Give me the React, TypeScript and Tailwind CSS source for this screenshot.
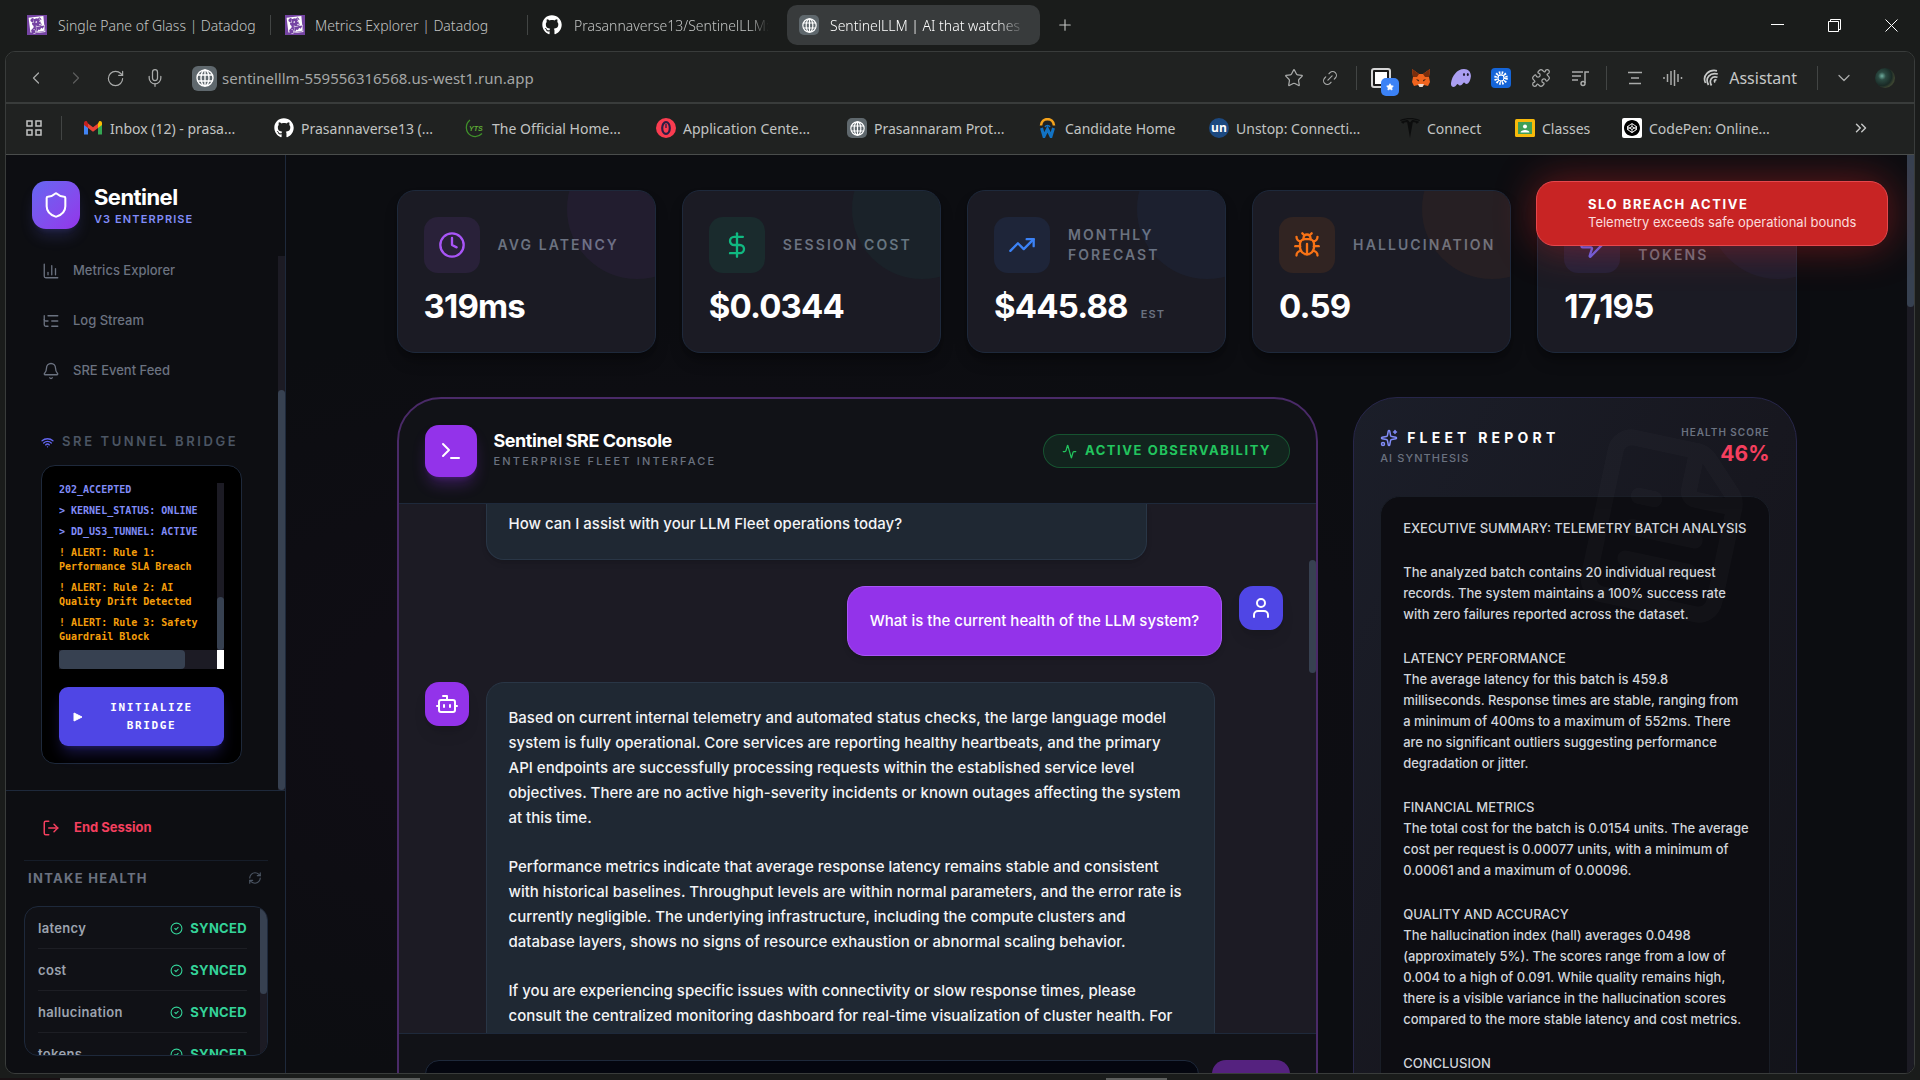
import type { ReactNode } from 'react';
import {
  Activity,
  Bell,
  Bot,
  Bug,
  ChartColumn,
  ChevronDown,
  ChevronLeft,
  ChevronRight,
  ChevronsRight,
  CircleCheck,
  Clock,
  DollarSign,
  FileText,
  Link2,
  ListTree,
  LogOut,
  Mic,
  Plus,
  Puzzle,
  RefreshCw,
  RotateCw,
  Shield,
  Sparkles,
  Star,
  Terminal,
  TrendingUp,
  User,
  Wifi,
  Zap,
} from 'lucide-react';
import { FaGithub } from 'react-icons/fa';
import { SiCodepen, SiDatadog, SiTesla } from 'react-icons/si';

const DatadogIcon = () => (
  <span className="flex size-5 shrink-0 items-center justify-center bg-[#7544a3] text-white">
    <SiDatadog size={18} />
  </span>
);

const Globe = ({ size }: { size: number }) => (
  <svg width={size} height={size} viewBox="0 0 18 18" fill="none" stroke="currentColor" strokeWidth="1.400">
    <circle cx="9" cy="9" r="8" />
    <ellipse cx="9" cy="9" rx="4" ry="8" />
    <path d="M9 1v16M1.500 6h15M1.500 12h15" />
  </svg>
);

const GlobeIcon = () => (
  <span className="flex size-5 shrink-0 items-center justify-center rounded-[5px] bg-[#5f686d] text-white">
    <Globe size={15} />
  </span>
);

const GmailIcon = () => (
  <svg className="size-5 shrink-0" viewBox="0 0 20 20">
    <path d="M1 5v11.500h4V9z" fill="#4285f4" />
    <path d="M19 5v11.500h-4V9z" fill="#34a853" />
    <path d="M15 5.500V10l4-3V5c0-2-2-2.600-3-1.600z" fill="#fbbc04" />
    <path d="M5 5.500 10 9.300l5-3.800V10l-5 3.800L5 10z" fill="#ea4335" />
    <path d="M5 5.500V10L1 7V5c0-2 2-2.600 3-1.600z" fill="#c5221f" />
  </svg>
);

const YtsIcon = () => (
  <svg className="size-5 shrink-0" viewBox="0 0 20 20">
    <path d="M5 2C0 6 0 14 6 17.500c4 2 8 1 11-2" fill="none" stroke="#3f8f2a" strokeWidth="1.300" />
    <text x="4" y="12.500" fontSize="7" fontWeight="700" fontStyle="italic" fontFamily="Liberation Sans, sans-serif" fill="#5fae35">
      YTS
    </text>
  </svg>
);

const OperaIcon = () => (
  <svg className="size-5 shrink-0" viewBox="0 0 20 20">
    <circle cx="10" cy="10" r="10" fill="#fa3c50" />
    <ellipse cx="10" cy="10" rx="3.800" ry="5.800" fill="none" stroke="#2b1d44" strokeWidth="2.200" />
    <path d="M10 6v4" stroke="#2b1d44" strokeWidth="1.300" />
  </svg>
);

const WorkdayIcon = () => (
  <svg className="size-5 shrink-0" viewBox="0 0 20 20" fill="none">
    <path d="M3 7.500C3.500-1 15.500-1 16 7.500" stroke="#f5a31c" strokeWidth="2.600" />
    <path d="M3.500 10l2.500 8.500L9.500 11l3.500 7.500L15.500 10" stroke="#1273c4" strokeWidth="3" />
    <path d="M7 9c1-2 4-2 5 0" stroke="#1273c4" strokeWidth="1.500" />
  </svg>
);

const UnstopIcon = () => (
  <span className="flex size-5 shrink-0 items-center justify-center rounded-full bg-[#1c4980] font-['Open_Sans',sans-serif] text-[12px] leading-3 font-bold text-white">
    un
  </span>
);

const ClassroomIcon = () => (
  <svg className="size-5 shrink-0" viewBox="0 0 20 20">
    <rect x="0" y="1" width="20" height="18" rx="1.500" fill="#f6b90b" />
    <rect x="3" y="4" width="14" height="12" fill="#3f9f57" />
    <circle cx="10" cy="8.500" r="2" fill="#fff" />
    <path d="M5.500 14.500c0-3.500 9-3.500 9 0z" fill="#fff" />
  </svg>
);

const MetamaskIcon = () => (
  <svg className="size-5" viewBox="0 0 20 20">
    <path d="M1 1l7 5h4l7-5-1 8 1 5-2 4-4-1-2 2H9l-2-2-4 1-2-4 1-5z" fill="#f0641e" />
    <path d="M1 1l7 5-2 3-4 0zM19 1l-7 5 2 3 4 0z" fill="#7a2d0c" />
    <path d="M7 16h6l-1.500 3h-3z" fill="#e8d9cf" />
    <path d="M5 11l3 1-.5 1.500zM15 11l-3 1 .5 1.500z" fill="#2a1a12" />
  </svg>
);

const PhantomIcon = () => (
  <svg className="size-5" viewBox="0 0 20 20">
    <path
      d="M0 15C1 8 6 1 13 1c5 0 7.500 4 6.800 8-.6 4-2.300 7-4.300 7-1.500 0-1.500-1.500-2.500-1.500s-1.500 3-4 3c-1.700 0-1.500-1.500-2.500-1.500S5 19 2.500 19C.8 19-.2 17.500 0 15z"
      fill="#ab9ff2"
    />
    <ellipse cx="13" cy="6.500" rx="1" ry="1.600" fill="#1f1c33" />
    <ellipse cx="16.800" cy="6.500" rx="1" ry="1.600" fill="#1f1c33" />
  </svg>
);

const BurstIcon = () => (
  <svg className="size-5" viewBox="0 0 20 20">
    <rect width="20" height="20" rx="4" fill="#1565d8" />
    <circle cx="10" cy="10" r="4.800" fill="none" stroke="#fff" strokeWidth="4" strokeDasharray="1.400 1.113" />
    <circle cx="10" cy="10" r="3" fill="none" stroke="#fff" strokeWidth="1" />
  </svg>
);

const ReaderIcon = () => (
  <span className="relative flex size-5">
    <span className="size-full rounded-[3px] border-2 border-[#d5d5d5] bg-white outline-2 -outline-offset-4 outline-[#1a1a1a]" />
    <span className="absolute top-2.5 left-2.5 flex size-[18px] items-center justify-center rounded-[5px] bg-[#3b82f6] text-white">
      <Star size={8} fill="currentColor" />
    </span>
  </span>
);

const PlaylistIcon = () => (
  <svg className="size-[18px]" viewBox="0 0 18 18" fill="none" stroke="currentColor" strokeWidth="1.500">
    <path d="M1 3h11M1 7h9M1 11h6M14 14V3h4" />
    <circle cx="12" cy="14.500" r="2" />
  </svg>
);

const LinesIcon = () => (
  <svg className="size-4" viewBox="0 0 16 16" stroke="currentColor" strokeWidth="1.500">
    <path d="M1 2.500h14M4 8h8M2 13.500h12" />
  </svg>
);

const WaveIcon = () => (
  <svg className="size-5" viewBox="0 0 20 20" stroke="currentColor" strokeWidth="1.500">
    <path d="M1 9v2M4.500 6v8M8 3v14M11.500 2v16M15 6v8M18.500 9v2" />
  </svg>
);

const AssistantIcon = () => (
  <svg className="size-[18px]" viewBox="0 0 18 18" fill="none" stroke="currentColor" strokeWidth="1.700">
    <path d="M2.500 14C-1 6.500 6 0 14 1.800M5.500 16C1.500 9 7 3 14.800 5M8.500 16.500C5.500 11 9 6.500 14.500 8.300M12 13.500c-1-1.500-.5-3 1.500-2.500" />
  </svg>
);

const tabs = [
  { title: 'Single Pane of Glass | Datadog', style: 'w-[243px] gap-[11px]', fade: '', icon: <DatadogIcon /> },
  { title: 'Metrics Explorer | Datadog', style: 'w-[242px] gap-2.5', fade: '', icon: <DatadogIcon /> },
  {
    title: 'Prasannaverse13/SentinelLLM:',
    style: 'w-[245px] gap-3',
    fade: 'mask-r-from-90%',
    icon: <FaGithub size={20} className="shrink-0 text-white" />,
  },
];

const bookmarks = [
  { title: 'Inbox (12) - prasa...', width: 'w-[191px]', icon: <GmailIcon /> },
  { title: 'Prasannaverse13 (...', width: 'w-[191px]', icon: <FaGithub size={20} className="shrink-0 text-white" /> },
  { title: 'The Official Home...', width: 'w-[191px]', icon: <YtsIcon /> },
  { title: 'Application Cente...', width: 'w-[191px]', icon: <OperaIcon /> },
  { title: 'Prasannaram Prot...', width: 'w-[191px]', icon: <GlobeIcon /> },
  { title: 'Candidate Home', width: 'w-[171px]', icon: <WorkdayIcon /> },
  { title: 'Unstop: Connecti...', width: 'w-[191px]', icon: <UnstopIcon /> },
  { title: 'Connect', width: 'w-[115px]', icon: <SiTesla size={20} className="shrink-0 text-[#0c0d0d]" /> },
  { title: 'Classes', width: 'w-[107px]', icon: <ClassroomIcon /> },
  {
    title: 'CodePen: Online...',
    width: 'w-[191px]',
    icon: (
      <span className="flex size-5 shrink-0 items-center justify-center rounded-[2px] bg-white text-black">
        <SiCodepen size={16} />
      </span>
    ),
  },
];

const TabBar = () => (
  <header className="flex h-[51px] shrink-0 items-center pb-px pl-[27px] text-[14px] font-light text-[#c2c4c3]">
    {tabs.map((tab, i) => (
      <div key={tab.title} className="flex items-center">
        {i > 0 && <span className="mr-3.5 h-5 w-px bg-[#424544]" />}
        <button className={`flex items-center text-left ${tab.style}`}>
          {tab.icon}
          <span className={`max-w-[201px] overflow-hidden whitespace-nowrap ${tab.fade}`}>{tab.title}</span>
        </button>
      </div>
    ))}
    <button className="flex h-10 w-[253px] items-center gap-[11px] rounded-[10px] bg-[#383b3c] pl-3 text-left text-white">
      <GlobeIcon />
      <span className="w-[196px] overflow-hidden mask-r-from-85% whitespace-nowrap">SentinelLLM | AI that watches</span>
    </button>
    <button aria-label="New tab" className="ml-4">
      <Plus size={18} strokeWidth={1.5} />
    </button>
    <div className="ml-auto flex gap-11 pr-[22px] text-white">
      <button aria-label="Minimize">
        <svg className="size-[13px]" viewBox="0 0 13 13" stroke="currentColor">
          <path d="M0 5.500h13" />
        </svg>
      </button>
      <button aria-label="Restore">
        <svg className="size-[13px]" viewBox="0 0 13 13" fill="none" stroke="currentColor">
          <path d="M.5 2.500h10v10H.5zM2.500 2.500v-2h10v10h-2" />
        </svg>
      </button>
      <button aria-label="Close">
        <svg className="size-[13px]" viewBox="0 0 13 13" stroke="currentColor">
          <path d="M.5.500l12 12M12.500.500l-12 12" />
        </svg>
      </button>
    </div>
  </header>
);

const Divider = () => <span className="h-6 w-px shrink-0 bg-[#424544]" />;

const Toolbar = () => (
  <div className="flex h-[52px] shrink-0 items-center border-b-2 border-[#393c3b] bg-[#202221] pt-0.5 pl-5 text-[#a9abaa]">
    <div className="flex items-center gap-5">
      <button aria-label="Back">
        <ChevronLeft size={20} strokeWidth={1.5} />
      </button>
      <button aria-label="Forward" className="text-[#5b5d5c]">
        <ChevronRight size={20} strokeWidth={1.5} />
      </button>
      <button aria-label="Reload">
        <RotateCw size={19} strokeWidth={1.5} />
      </button>
      <button aria-label="Voice search">
        <Mic size={20} strokeWidth={1.5} />
      </button>
    </div>
    <span className="ml-[27px] flex size-[25px] items-center justify-center rounded-[6px] bg-[#5f686d] text-white">
      <Globe size={18} />
    </span>
    <input
      aria-label="Address"
      readOnly
      value="sentinelllm-559556316568.us-west1.run.app"
      className="ml-[5px] min-w-0 flex-1 text-[15px] text-[#a4a6a5] outline-none"
    />
    <div className="flex items-center gap-[17px]">
      <Star size={20} strokeWidth={1.5} />
      <Link2 size={18} strokeWidth={1.5} className="-rotate-45" />
      <Divider />
    </div>
    <div className="ml-3.5 flex items-center gap-5">
      <ReaderIcon />
      <MetamaskIcon />
      <PhantomIcon />
      <BurstIcon />
      <Puzzle size={20} strokeWidth={1.5} />
      <PlaylistIcon />
    </div>
    <div className="ml-[17px] flex items-center gap-5">
      <Divider />
      <LinesIcon />
      <WaveIcon />
      <button className="flex items-center gap-2 text-[16px] text-[#c6c8c7]">
        <AssistantIcon />
        Assistant
      </button>
      <Divider />
    </div>
    <ChevronDown size={20} strokeWidth={1.5} className="ml-4" />
    <span className="mr-[19px] ml-[21px] size-5 rounded-full bg-[#2a3a34] bg-[radial-gradient(circle_at_35%_40%,#6fae9f_0,#2b4a42_22%,#1a2a26_55%,#3a4330_70%)]" />
  </div>
);

const BookmarkBar = () => (
  <nav className="flex h-[51px] shrink-0 items-center border-b border-[#4a4d4c] bg-[#202221] pb-0.5 pl-5 text-[14px] text-[#c2c4c3]">
    <svg className="size-4 shrink-0" viewBox="0 0 16 16" fill="none" stroke="currentColor" strokeWidth="1.500">
      <path d="M1 1h5v5H1zM10 1h5v5h-5zM1 10h5v5H1zM10 10h5v5h-5z" />
    </svg>
    <span className="mr-[21px] ml-[19px] h-6 w-px bg-[#424544]" />
    {bookmarks.map((b) => (
      <a key={b.title} href="#" className={`flex shrink-0 items-center gap-[7px] whitespace-nowrap ${b.width}`}>
        {b.icon}
        {b.title}
      </a>
    ))}
    <button aria-label="More bookmarks" className="mr-11 ml-auto">
      <ChevronsRight size={18} />
    </button>
  </nav>
);

const navItems = [
  { label: 'Metrics Explorer', icon: <ChartColumn size={18} strokeWidth={1.75} /> },
  { label: 'Log Stream', icon: <ListTree size={18} strokeWidth={1.75} /> },
  { label: 'SRE Event Feed', icon: <Bell size={18} strokeWidth={1.75} /> },
];

const intake = ['latency', 'cost', 'hallucination', 'tokens'];

const BridgeCard = () => (
  <div className="rounded-[14px] border border-[#1e293b] bg-black p-[17px] font-['DejaVu_Sans_Mono',monospace]">
    <div className="flex h-[167px]">
      <div className="flex flex-1 flex-col gap-[7px] overflow-hidden text-[10px] leading-[14px] font-bold text-[#818cf8]">
        <p>202_ACCEPTED</p>
        <p className="whitespace-nowrap">&gt; KERNEL_STATUS: ONLINE</p>
        <p className="whitespace-nowrap">&gt; DD_US3_TUNNEL: ACTIVE</p>
        <p className="text-[#f59e0b]">
          ! ALERT: Rule 1:
          <br />
          Performance SLA Breach
        </p>
        <p className="text-[#f59e0b]">
          ! ALERT: Rule 2: AI
          <br />
          Quality Drift Detected
        </p>
        <p className="text-[#f59e0b]">
          ! ALERT: Rule 3: Safety
          <br />
          Guardrail Block
        </p>
      </div>
      <div className="flex w-[7px] items-end bg-[#1c1b24]">
        <span className="h-[53px] w-full rounded-[4px] bg-[#374151]" />
      </div>
    </div>
    <div className="flex h-[19px]">
      <div className="flex-1 bg-[#1c1b24]">
        <div className="h-full w-4/5 rounded-[4px] bg-[#374151]" />
      </div>
      <span className="w-[7px] bg-white" />
    </div>
    <button className="mt-[18px] flex h-[59px] w-full items-center rounded-[9px] bg-[#4f46e5] pr-3 pl-3.5 text-[11px] leading-[18px] font-bold tracking-[0.15em] text-white shadow-lg shadow-[#4f46e5]/30">
      <svg className="size-2.5" viewBox="0 0 10 10">
        <path d="M1 1v8l8-4z" fill="currentColor" stroke="currentColor" strokeLinejoin="round" />
      </svg>
      <span className="flex-1 pl-2 text-center">
        INITIALIZE
        <br />
        BRIDGE
      </span>
    </button>
  </div>
);

const Sidebar = () => (
  <aside className="flex w-[280px] shrink-0 flex-col border-r border-[#1e293b] bg-[#0d0e12]">
    <div className="flex h-[101px] shrink-0 gap-3.5 px-[26px] pt-[26px]">
      <span className="flex size-12 items-center justify-center rounded-[14px] bg-linear-to-br from-[#6366f1] to-[#9333ea] text-white shadow-lg shadow-[#6366f1]/20">
        <Shield size={28} strokeWidth={1.75} />
      </span>
      <div className="pt-0.5">
        <p className="text-[22px] leading-7 font-bold tracking-tight text-white">Sentinel</p>
        <p className="text-[11px] leading-4 font-semibold tracking-[0.1em] text-[#818cf8]">V3 ENTERPRISE</p>
      </div>
    </div>

    <div className="flex min-h-0 flex-1">
      <div className="flex-1 overflow-hidden pr-9 pl-[35px]">
        <nav className="flex flex-col gap-5 pl-px text-[13px] font-medium text-[#6b7280]">
          {navItems.map((item) => (
            <a key={item.label} href="#" className="flex h-[30px] items-center gap-[13px]">
              {item.icon}
              {item.label}
            </a>
          ))}
        </nav>
        <h3 className="mt-[46px] mb-[13px] flex h-5 items-center gap-2 text-[13px] font-semibold tracking-[0.2em] whitespace-nowrap text-[#4b5563]">
          <Wifi size={13} strokeWidth={2.5} className="shrink-0 text-[#6366f1]" />
          SRE TUNNEL BRIDGE
        </h3>
        <BridgeCard />
      </div>
      <div className="w-[7px] bg-[#1c1b24] pt-[134px]">
        <div className="h-full rounded-[4px] bg-[#374151]" />
      </div>
    </div>

    <div className="h-[283px] shrink-0 border-t border-[#1e293b] pr-[17px] pl-[18px]">
      <button className="flex h-[69px] w-full items-center gap-3.5 pt-[5px] pl-[18px] text-[13px] font-bold text-[#f43f5e]">
        <LogOut size={18} />
        End Session
      </button>
      <div className="flex h-[46px] justify-between border-t border-[#161d29] px-1 pt-[7px] text-[13px] leading-5 font-bold tracking-[0.1em] text-[#6b7280]">
        INTAKE HEALTH
        <button aria-label="Refresh" className="mr-0.5 h-5 text-[#4b5563]">
          <RefreshCw size={14} />
        </button>
      </div>
      <div className="flex h-[150px] overflow-hidden rounded-[14px] border border-[#1e293b] bg-[#101116]">
        <ul className="flex-1 px-[13px] text-[13px] font-semibold">
          {intake.map((name) => (
            <li key={name} className="flex h-[42px] items-center justify-between border-b border-[#1d1e24] pt-0.5 tracking-wide text-[#9ca3af]">
              {name}
              <span className="flex items-center gap-[7px] font-bold text-[#34d399]">
                <CircleCheck size={13} />
                SYNCED
              </span>
            </li>
          ))}
        </ul>
        <div className="w-[7px] bg-[#1c1b24]">
          <div className="h-[87px] rounded-[4px] bg-[#374151]" />
        </div>
      </div>
    </div>
  </aside>
);

type StatProps = {
  label: string;
  value: string;
  suffix?: string;
  icon: ReactNode;
  tint: string;
  blob: string;
};

const StatCard = ({ label, value, suffix, icon, tint, blob }: StatProps) => (
  <div className="relative h-[163px] overflow-hidden rounded-[18px] border border-[#1e293b] bg-[#1b1b24] p-[26px] shadow-lg shadow-black/30">
    <span className={`absolute -top-[52px] -right-[52px] size-[140px] rounded-full ${blob}`} />
    <div className="flex items-center gap-[18px]">
      <span className={`flex size-14 shrink-0 items-center justify-center rounded-[14px] ${tint}`}>{icon}</span>
      <p className="text-[14px] leading-5 font-semibold tracking-[0.15em] text-[#6b7280]">{label}</p>
    </div>
    <p className="mt-[13px] flex items-baseline gap-[13px] text-[33px] leading-10 font-bold tracking-tight text-white">
      {value}
      {suffix && <span className="text-[11px] leading-4 font-semibold tracking-[0.1em] text-[#6b7280]">{suffix}</span>}
    </p>
  </div>
);

const stats: StatProps[] = [
  { label: 'AVG LATENCY', value: '319ms', icon: <Clock size={28} />, tint: 'bg-[#a855f7]/10 text-[#a855f7]', blob: 'bg-[#a855f7]/5' },
  { label: 'SESSION COST', value: '$0.0344', icon: <DollarSign size={28} />, tint: 'bg-[#10b981]/10 text-[#10b981]', blob: 'bg-[#10b981]/5' },
  { label: 'MONTHLY FORECAST', value: '$445.88', suffix: 'EST', icon: <TrendingUp size={28} />, tint: 'bg-[#3b82f6]/10 text-[#3b82f6]', blob: 'bg-[#3b82f6]/5' },
  { label: 'HALLUCINATION', value: '0.59', icon: <Bug size={28} />, tint: 'bg-[#f97316]/10 text-[#f97316]', blob: 'bg-[#f97316]/5' },
  { label: 'TOTAL TOKENS', value: '17,195', icon: <Zap size={28} />, tint: 'bg-[#6366f1]/10 text-[#6366f1]', blob: 'bg-[#6366f1]/5' },
];

const answer = [
  `Based on current internal telemetry and automated status checks, the large language model
system is fully operational. Core services are reporting healthy heartbeats, and the primary
API endpoints are successfully processing requests within the established service level
objectives. There are no active high-severity incidents or known outages affecting the system
at this time.`,
  `Performance metrics indicate that average response latency remains stable and consistent
with historical baselines. Throughput levels are within normal parameters, and the error rate is
currently negligible. The underlying infrastructure, including the compute clusters and
database layers, shows no signs of resource exhaustion or abnormal scaling behavior.`,
  `If you are experiencing specific issues with connectivity or slow response times, please
consult the centralized monitoring dashboard for real-time visualization of cluster health. For`,
];

const Console = () => (
  <section className="col-span-2 overflow-hidden rounded-[44px] border-2 border-[#4a2a68] bg-[#111217]">
    <div className="flex h-[105px] items-center border-b border-[#1e293b] px-[26px]">
      <span className="flex size-[52px] items-center justify-center rounded-[14px] bg-[#9333ea] text-white shadow-lg shadow-[#9333ea]/30">
        <Terminal size={24} />
      </span>
      <div className="ml-[17px] pb-1">
        <h2 className="text-[18px] leading-6 font-bold tracking-tight text-white">Sentinel SRE Console</h2>
        <p className="text-[11px] leading-4 font-medium tracking-[0.2em] text-[#6b7280]">ENTERPRISE FLEET INTERFACE</p>
      </div>
      <span className="ml-auto flex h-[34px] items-center gap-2 rounded-full border border-[#22c55e]/30 bg-[#22c55e]/10 px-[18px] text-[13px] font-bold tracking-[0.12em] text-[#22c55e]">
        <Activity size={15} />
        ACTIVE OBSERVABILITY
      </span>
    </div>
    <div className="flex h-[529px] overflow-hidden bg-[#1c1b24]">
      <div className="flex flex-1 flex-col gap-[26px] px-[26px] text-[15px] leading-[25px] font-medium text-[#f3f4f6]">
        <div className="ml-[61px] w-[77%] shrink-0 rounded-b-[18px] border border-t-0 border-[#293646] bg-[#1f2833] px-[22px] pt-[7px] pb-[23px] shadow-md">
          How can I assist with your LLM Fleet operations today?
        </div>
        <div className="flex shrink-0 justify-end gap-[17px]">
          <p className="rounded-[18px] border border-[#a855f7] bg-[#9333ea] px-[22px] pt-[21px] pb-[22px] text-white shadow-md">
            What is the current health of the LLM system?
          </p>
          <span className="flex size-11 items-center justify-center rounded-[14px] bg-[#4f46e5] text-white shadow-lg">
            <User size={24} />
          </span>
        </div>
        <div className="flex shrink-0 gap-[17px]">
          <span className="flex size-11 shrink-0 items-center justify-center rounded-[14px] bg-[#9333ea] text-white shadow-lg">
            <Bot size={24} />
          </span>
          <div className="flex w-[85%] flex-col gap-6 rounded-[18px] border border-[#293646] bg-[#1f2833] px-[22px] pt-[22px] pb-12 whitespace-pre">
            {answer.map((text) => (
              <p key={text}>{text}</p>
            ))}
          </div>
        </div>
      </div>
      <div className="w-[7px] pt-14">
        <div className="h-[113px] rounded-[4px] bg-[#374151]" />
      </div>
    </div>
    <form className="flex gap-[13px] border-t border-[#1e293b] p-[26px]">
      <input
        aria-label="Message"
        className="h-14 min-w-0 flex-1 rounded-[14px] border border-[#1e293b] bg-[#04060f] px-5 text-[15px] text-white outline-none"
      />
      <button aria-label="Send" type="button" className="h-14 w-[78px] rounded-[14px] bg-[#55227f]" />
    </form>
  </section>
);

const report = [
  'EXECUTIVE SUMMARY: TELEMETRY BATCH ANALYSIS',
  `The analyzed batch contains 20 individual request
records. The system maintains a 100% success rate
with zero failures reported across the dataset.`,
  `LATENCY PERFORMANCE
The average latency for this batch is 459.8
milliseconds. Response times are stable, ranging from
a minimum of 400ms to a maximum of 552ms. There
are no significant outliers suggesting performance
degradation or jitter.`,
  `FINANCIAL METRICS
The total cost for the batch is 0.0154 units. The average
cost per request is 0.00077 units, with a minimum of
0.00061 and a maximum of 0.00096.`,
  `QUALITY AND ACCURACY
The hallucination index (hall) averages 0.0498
(approximately 5%). The scores range from a low of
0.004 to a high of 0.091. While quality remains high,
there is a visible variance in the hallucination scores
compared to the more stable latency and cost metrics.`,
  'CONCLUSION',
];

const FleetReport = () => (
  <section className="relative overflow-hidden rounded-[44px] border border-[#27264a] bg-linear-to-br from-[#1b1e29] via-[#17171f] to-[#121319] px-[26px] pt-[26px]">
    <div className="flex h-[72px] justify-between">
      <div className="pt-0.5">
        <h2 className="flex items-center gap-[9px] text-[14px] leading-6 font-bold tracking-[0.3em] text-white">
          <Sparkles size={18} className="text-[#818cf8]" />
          FLEET REPORT
        </h2>
        <p className="text-[11px] leading-4 font-medium tracking-[0.1em] text-[#6b7280]">AI SYNTHESIS</p>
      </div>
      <div className="text-right">
        <p className="text-[10px] leading-4 font-semibold tracking-[0.1em] text-[#6b7280]">HEALTH SCORE</p>
        <p className="text-[21px] leading-7 font-bold text-[#f43f5e]">46%</p>
      </div>
    </div>
    <div className="flex h-[700px] flex-col gap-[23px] rounded-[20px] border border-[#191d26] bg-[#0d0d12] px-[22px] pt-[21px] text-[13px] leading-[21px] font-medium whitespace-pre text-[#d1d5db]">
      {report.map((text) => (
        <p key={text}>{text}</p>
      ))}
    </div>
    <FileText size={192} className="pointer-events-none absolute top-8 right-[35px] rotate-12 text-white opacity-[0.02]" />
  </section>
);

const Toast = () => (
  <div
    role="alert"
    className="absolute top-[26px] right-[26px] flex h-[65px] w-[352px] flex-col justify-center rounded-[18px] border border-[#e5484d] bg-[#c82424] pb-0.5 pl-[51px] text-white shadow-[0_0_40px_rgba(220,38,38,0.45)]"
  >
    <p className="text-[13px] leading-[18px] font-bold tracking-[0.12em]">SLO BREACH ACTIVE</p>
    <p className="text-[13px] leading-[18px] text-[#fbdcdc]">Telemetry exceeds safe operational bounds</p>
  </div>
);

const Dashboard = () => (
  <main className="flex min-w-0 flex-1 bg-[#0c0d11] bg-[radial-gradient(ellipse_at_25%_60%,#110d16_0%,transparent_50%)]">
    <div className="flex-1 overflow-hidden px-[110px] pt-[35px]">
      <div className="mx-auto max-w-[1400px]">
        <div className="grid grid-cols-5 gap-[26px]">
          {stats.map((stat) => (
            <StatCard key={stat.label} {...stat} />
          ))}
        </div>
        <div className="mt-11 grid grid-cols-3 gap-[35px]">
          <Console />
          <FleetReport />
        </div>
      </div>
    </div>
    <div className="w-[7px] bg-[#1c1b24]">
      <div className="h-[152px] rounded-b-[4px] bg-[#374151]" />
    </div>
  </main>
);

export default function App() {
  return (
    <div className="flex h-screen flex-col overflow-hidden bg-[#1a1c1b] font-['Noto_Sans',sans-serif]">
      <TabBar />
      <div className="mx-[5px] flex min-h-0 flex-1 flex-col overflow-hidden rounded-[10px] border border-[#393c3b]">
        <Toolbar />
        <BookmarkBar />
        <div className="relative flex min-h-0 flex-1 overflow-hidden font-['Inter',sans-serif]">
          <Sidebar />
          <Dashboard />
          <Toast />
        </div>
      </div>
      <div className="flex h-1.5 shrink-0 items-end">
        <span className="h-0.5 w-[60px] bg-[#191114]" />
        <span className="h-0.5 w-[360px] bg-[#5c5e5d]" />
        <span className="ml-[686px] h-0.5 w-[61px] bg-[#5c5e5d]" />
      </div>
    </div>
  );
}
